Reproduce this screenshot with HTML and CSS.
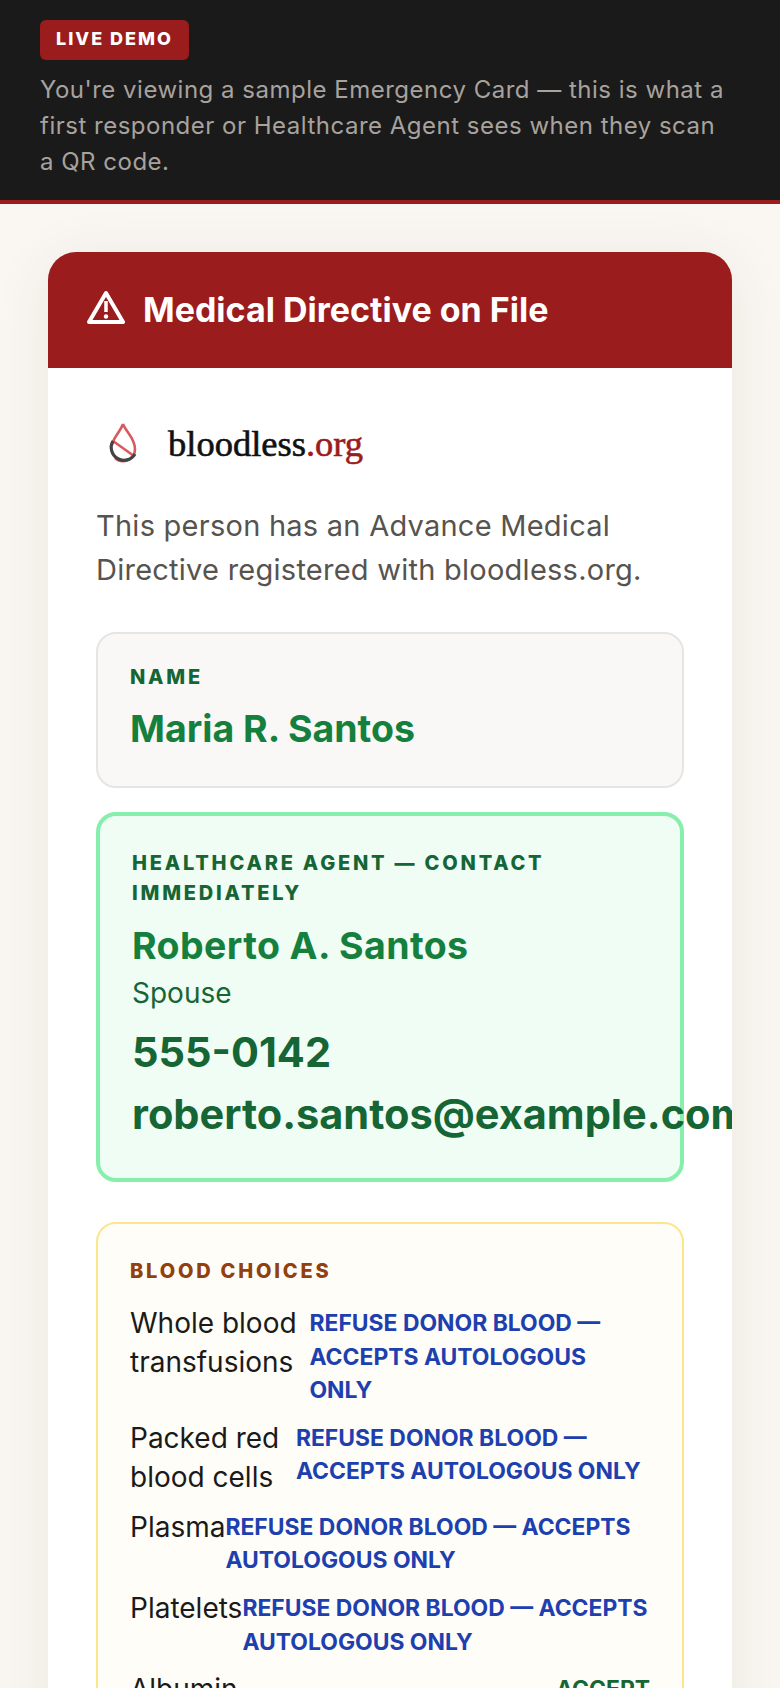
FILE: index.html
```html
<!DOCTYPE html>
<html lang="en">
  <head>
    <meta charset="UTF-8" />
    <meta name="viewport" content="width=device-width, initial-scale=1.0" />
    <title>Emergency Card</title>
    <link rel="stylesheet" href="styles.css">
  </head>
  <body>
    <div class="demo-banner">
      <span class="demo-badge">LIVE DEMO</span>
      <p>You're viewing a sample Emergency Card — this is what a first responder or Healthcare Agent sees when they scan a QR code.</p>
    </div>
    <div class="page">
      <div class="card">
        <div class="card-head">
          <svg class="warn-icon" viewBox="0 0 38 34" width="38" height="34">
            <path d="M19 3 L36 32 H2 Z" fill="none" stroke="#fff" stroke-width="4" stroke-linejoin="round"/>
            <path d="M19 11 V22" stroke="#fff" stroke-width="3.5"/>
            <circle cx="19" cy="26.500" r="2.200" fill="#fff"/>
          </svg>
          <h1>Medical Directive on File</h1>
        </div>
        <div class="card-body">
          <div class="logo">
            <svg class="drop" viewBox="0 0 30 44" width="30" height="44">
              <path d="M15 3 C18 11 27 17 27 28 A12 12 0 0 1 7 37" fill="none" stroke="#d9595f" stroke-width="2.600"/>
              <path d="M15 3 C12 11 5 17 4 24" fill="none" stroke="#d9595f" stroke-width="2.600"/>
              <path d="M5 20 L26 35" stroke="#d9595f" stroke-width="2.600"/>
              <path d="M5 20 A12.500 12.500 0 0 0 27 33" fill="none" stroke="#444" stroke-width="3.200"/>
            </svg>
            <span class="logo-text">bloodless<span class="logo-org">.org</span></span>
          </div>
          <p class="intro">This person has an Advance Medical Directive registered with bloodless.org.</p>

          <div class="box box-name">
            <div class="label">NAME</div>
            <div class="name">Maria R. Santos</div>
          </div>

          <div class="box box-agent">
            <div class="label">HEALTHCARE AGENT — CONTACT IMMEDIATELY</div>
            <div class="name">Roberto A. Santos</div>
            <div class="relation">Spouse</div>
            <div class="contact">555-0142</div>
            <div class="contact">roberto.santos@example.com</div>
          </div>

          <div class="box box-blood">
            <div class="label label-blood">BLOOD CHOICES</div>
            <div class="row"><span class="row-name">Whole blood transfusions</span><span class="row-val">REFUSE DONOR BLOOD — ACCEPTS AUTOLOGOUS ONLY</span></div>
            <div class="row"><span class="row-name">Packed red blood cells</span><span class="row-val">REFUSE DONOR BLOOD — ACCEPTS AUTOLOGOUS ONLY</span></div>
            <div class="row"><span class="row-name">Plasma</span><span class="row-val">REFUSE DONOR BLOOD — ACCEPTS AUTOLOGOUS ONLY</span></div>
            <div class="row"><span class="row-name">Platelets</span><span class="row-val">REFUSE DONOR BLOOD — ACCEPTS AUTOLOGOUS ONLY</span></div>
            <div class="row"><span class="row-name">Albumin</span><span class="row-val row-ok">ACCEPT</span></div>
          </div>
        </div>
      </div>
    </div>
  </body>
</html>
```

FILE: styles.css
```css
html, body {
  height: 100%;
  overflow: hidden;
}
body {
  margin: 0;
  background: #faf7f2;
  font-family: "Inter", "Liberation Sans", sans-serif;
  color: #1a1a1a;
}
.demo-banner {
  background: #1a1a1a;
  border-bottom: 4px solid #9b1c1c;
  padding: 20px 40px;
}
.demo-badge {
  display: block;
  width: fit-content;
  background: #9b1c1c;
  color: #fff;
  font-size: 18px;
  font-weight: 800;
  letter-spacing: 2px;
  line-height: 38px;
  height: 40px;
  padding: 0 16px;
  border-radius: 6px;
}
.demo-banner p {
  margin: 12px 0 0;
  max-width: 690px;
  color: #a8a29e;
  font-size: 24px;
  letter-spacing: 0.5px;
  line-height: 36px;
}
.page {
  padding: 48px 48px 0;
}
.card {
  background: #fff;
  border-radius: 28px;
  overflow: hidden;
  box-shadow: 0 8px 60px rgba(60, 40, 20, 0.08);
}
.card-head {
  background: #9b1c1c;
  height: 116px;
  padding: 0 38px 0 39px;
  display: flex;
  align-items: center;
  gap: 18px;
  color: #fff;
}
.card-head h1 {
  margin: 0 0 2px;
  font-size: 34px;
  font-weight: 700;
}
.warn-icon {
  flex: none;
  margin-bottom: 6px;
}
.card-body {
  padding: 50px 48px 0;
}
.logo {
  display: flex;
  align-items: center;
  gap: 30px;
  padding-left: 12px;
  height: 50px;
}
.logo-text {
  font-family: "Liberation Serif", serif;
  font-size: 36.500px;
  -webkit-text-stroke: 0.6px currentColor;
  color: #111;
}
.logo-org {
  color: #9b1c1c;
}
.intro {
  margin: 36px 0 40px;
  font-size: 29px;
  letter-spacing: 0.25px;
  line-height: 44px;
  color: #57534e;
}
.box {
  border-radius: 20px;
  box-sizing: border-box;
}
.box-name {
  background: #f9f8f6;
  border: 2px solid #e7e5e4;
  padding: 28px 32px 31px;
  margin-bottom: 24px;
}
.box-name .label {
  margin-bottom: 11px;
}
.box-agent {
  background: #f0fdf4;
  border: 4px solid #86efac;
  padding: 32px 32px 33px;
  margin-bottom: 40px;
}
.box-agent .name {
  letter-spacing: 0.4px;
}
.box-blood {
  background: #fffdf7;
  border: 2px solid #fde68a;
  padding: 32px;
}
.label {
  font-size: 20px;
  font-weight: 800;
  letter-spacing: 2.8px;
  line-height: 30px;
  color: #166534;
  margin-bottom: 12px;
}
.box-blood .label-blood {
  color: #92400e;
  margin-bottom: 18px;
}
.name {
  font-size: 37.500px;
  font-weight: 700;
  line-height: 52px;
  color: #15803d;
}
.relation {
  font-size: 28px;
  line-height: 42px;
  margin-bottom: 7px;
  color: #166534;
}
.contact {
  font-size: 41.500px;
  font-weight: 700;
  line-height: 62px;
  color: #166534;
  white-space: nowrap;
}
.row {
  display: flex;
  justify-content: space-between;
  margin-bottom: 11px;
}
.row-name {
  font-size: 28px;
  line-height: 39px;
}
.row-val {
  font-size: 22.900px;
  font-weight: 700;
  line-height: 33.600px;
  padding-top: 3px;
  color: #1e40af;
}
.row-ok {
  color: #166534;
}
```
